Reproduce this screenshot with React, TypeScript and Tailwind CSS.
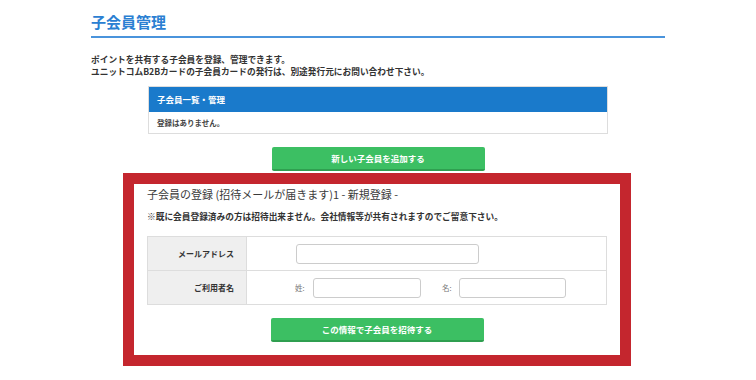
export default function App() {
  return (
    <div className="w-[756px] h-[380px] bg-white overflow-hidden font-['Noto_Sans_CJK_JP','Noto_Sans',sans-serif] text-[#333]">
      <div className="w-[574px] mx-auto pt-[12px]">
        <h1 className="text-[15px] leading-[20px] font-bold text-[#2b80d2]">子会員管理</h1>
        <div className="h-[2px] bg-[#4a94dc] mt-[4px]" />
        <p className="mt-[16px] text-[8.7px] leading-[12px] font-bold text-[#333]">
          ポイントを共有する子会員を登録、管理できます。
          <br />
          ユニットコムB2Bカードの子会員カードの発行は、別途発行元にお問い合わせ下さい。
        </p>

        <div className="w-[460px] mx-auto mt-[8px] border border-[#dddddd]">
          <div className="h-[25px] bg-[#1a7acb] text-white text-[8.5px] font-bold flex items-center pl-[8px]">子会員一覧・管理</div>
          <div className="h-[21px] flex items-center pl-[8px] text-[7.5px] font-bold text-[#444]">登録はありません。</div>
        </div>

        <button className="block w-[213px] h-[24px] mx-auto mt-[13px] bg-[#3cbf63] border-b-2 border-[#2f9f50] rounded-[2px] text-white text-[8.5px] font-bold">
          新しい子会員を追加する
        </button>

        <div className="w-[508px] ml-[32px] mt-[2px] border-[11px] border-[#c4262e] px-[13px] pt-[2px] pb-[13px]">
          <h2 className="text-[11px] leading-[16px] text-[#3a3a3a]">子会員の登録 (招待メールが届きます)1 - 新規登録 -</h2>
          <p className="mt-[9px] text-[8.7px] leading-[12px] font-bold text-[#333]">
            ※既に会員登録済みの方は招待出来ません。会社情報等が共有されますのでご留意下さい。
          </p>

          <div className="mt-[13px] border border-[#dddddd]">
            <div className="flex h-[34px] border-b border-[#dddddd]">
              <div className="w-[99px] bg-[#efefef] border-r border-[#dddddd] flex items-center justify-end pr-[12px] text-[8px] font-bold">メールアドレス</div>
              <div className="flex items-center pl-[49px]">
                <div className="w-[183px] h-[20px] border border-[#cccccc] rounded-[3px] bg-white" />
              </div>
            </div>
            <div className="flex h-[33px]">
              <div className="w-[99px] bg-[#efefef] border-r border-[#dddddd] flex items-center justify-end pr-[12px] text-[8px] font-bold">ご利用者名</div>
              <div className="flex items-center pl-[48px]">
                <span className="text-[7.5px] text-[#777] w-[18px]">姓:</span>
                <div className="w-[108px] h-[20px] border border-[#cccccc] rounded-[3px] bg-white" />
                <span className="ml-[21px] text-[7.5px] text-[#777] w-[17px]">名:</span>
                <div className="w-[107px] h-[20px] border border-[#cccccc] rounded-[3px] bg-white" />
              </div>
            </div>
          </div>

          <button className="block w-[213px] h-[24px] mx-auto mt-[13px] bg-[#3cbf63] border-b-2 border-[#2f9f50] rounded-[2px] text-white text-[8.5px] font-bold">
            この情報で子会員を招待する
          </button>
        </div>
      </div>
    </div>
  );
}
